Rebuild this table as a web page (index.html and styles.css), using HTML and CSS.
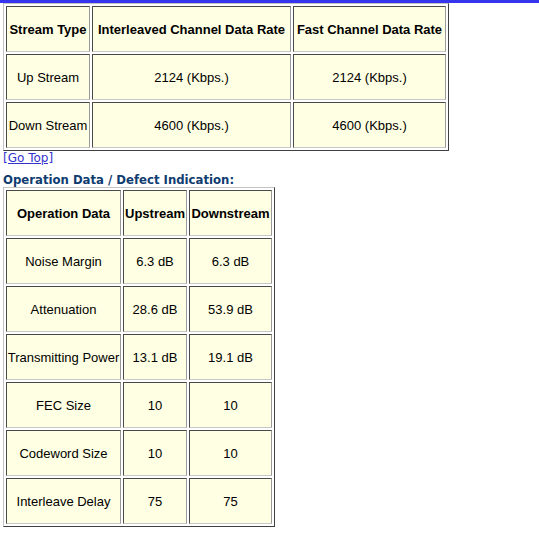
FILE: index.html
```html
<!DOCTYPE html>
<html>
<head>
<meta charset="utf-8">
<link rel="stylesheet" href="styles.css">
</head>
<body>
<div class="topbar"></div>
<div class="page">
  <table class="grid rate">
    <tr class="head">
      <td class="c-type">Stream Type</td>
      <td class="c-int">Interleaved Channel Data Rate</td>
      <td class="c-fast">Fast Channel Data Rate</td>
    </tr>
    <tr>
      <td>Up Stream</td>
      <td>2124 (Kbps.)</td>
      <td>2124 (Kbps.)</td>
    </tr>
    <tr>
      <td>Down Stream</td>
      <td>4600 (Kbps.)</td>
      <td>4600 (Kbps.)</td>
    </tr>
  </table>
  <div class="gotop"><a href="#">[Go Top]</a></div>
  <div class="section-title">Operation Data / Defect Indication:</div>
  <table class="grid ops">
    <tr class="head">
      <td class="c-op">Operation Data</td>
      <td class="c-up">Upstream</td>
      <td class="c-down">Downstream</td>
    </tr>
    <tr><td>Noise Margin</td><td>6.3 dB</td><td>6.3 dB</td></tr>
    <tr><td>Attenuation</td><td>28.6 dB</td><td>53.9 dB</td></tr>
    <tr><td>Transmitting Power</td><td>13.1 dB</td><td>19.1 dB</td></tr>
    <tr><td>FEC Size</td><td>10</td><td>10</td></tr>
    <tr><td>Codeword Size</td><td>10</td><td>10</td></tr>
    <tr><td>Interleave Delay</td><td>75</td><td>75</td></tr>
  </table>
</div>
</body>
</html>
```
FILE: styles.css
```css
html, body {
  margin: 0;
  padding: 0;
  background: #ffffff;
}
.topbar {
  height: 3px;
  background: #3535ee;
}
.page {
  padding-left: 3px;
}
.grid {
  border-collapse: separate;
  border-spacing: 2px;
  table-layout: fixed;
  border-top: 1px solid #c4c4c4;
  border-left: 1px solid #c4c4c4;
  border-right: 1px solid #404040;
  border-bottom: 1px solid #404040;
  font-family: "Liberation Sans", Arial, sans-serif;
  font-size: 13px;
  color: #000;
}
.grid td {
  box-sizing: border-box;
  height: 46px;
  padding: 0;
  text-align: center;
  vertical-align: middle;
  background: #ffffe3;
  border-top: 1px solid #4a4a4a;
  border-left: 1px solid #4a4a4a;
  border-right: 1px solid #9a9a9a;
  border-bottom: 1px solid #c8c8c8;
  white-space: nowrap;
}
.grid .head td {
  font-weight: bold;
}
.rate { width: 446px; }
.c-type { width: 84px; }
.c-int { width: 199px; }
.c-fast { width: 153px; }
.ops { width: 272px; }
.c-op { width: 115px; }
.c-up { width: 64px; }
.c-down { width: 83px; }
.gotop {
  font-family: "DejaVu Sans", Verdana, sans-serif;
  font-size: 12px;
  line-height: 14px;
  height: 14px;
}
.gotop a {
  color: #3333cc;
  text-decoration: underline;
}
.section-title {
  margin-top: 8px;
  font-family: "DejaVu Sans", Verdana, sans-serif;
  font-size: 11.7px;
  font-weight: bold;
  line-height: 14px;
  color: #0f3c70;
}
```
